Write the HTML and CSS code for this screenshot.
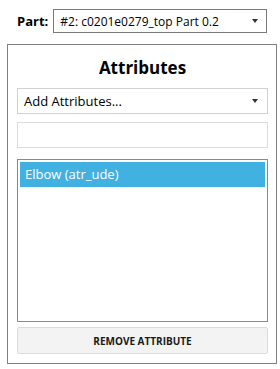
FILE: index.html
```html
<!DOCTYPE html>
<html lang="en">
<head>
  <meta charset="UTF-8" />
  <title>Attributes</title>
  <link rel="stylesheet" href="styles.css">
</head>
<body>
  <div class="part-row">
    <label class="part-label">Part:</label>
    <div class="combo part-combo">
      <span>#2: c0201e0279_top Part 0.2</span>
      <span class="arrow"></span>
    </div>
  </div>

  <section class="panel">
    <h2>Attributes</h2>

    <div class="combo add-combo">
      <span>Add Attributes...</span>
      <span class="arrow"></span>
    </div>

    <div class="text-box"></div>

    <ul class="list-box">
      <li class="selected">Elbow (atr_ude)</li>
    </ul>

    <button class="remove-btn">REMOVE ATTRIBUTE</button>
  </section>
</body>
</html>
```

FILE: styles.css
```css
body {
  margin: 0;
  background-color: #fff;
  color: #000;
  font-family: 'Open Sans', 'Noto Sans', sans-serif;
  font-size: 13px;
}

.part-row {
  display: flex;
  align-items: center;
  padding: 9px 0 0 17px;
}

.part-label {
  font-weight: bold;
  font-size: 13px;
  margin-right: 5px;
}

.combo {
  display: flex;
  align-items: center;
  justify-content: space-between;
  box-sizing: border-box;
  background-color: #fff;
}

.part-combo {
  width: 214px;
  height: 24px;
  border: 1px solid #7a7a7a;
  padding: 0 8px 0 6px;
  font-size: 12px;
}

.arrow {
  width: 0;
  height: 0;
  border-left: 3px solid transparent;
  border-right: 3px solid transparent;
  border-top: 4px solid #333;
}

.panel {
  box-sizing: border-box;
  width: 270px;
  height: 320px;
  margin: 11px 0 0 7px;
  border: 1px solid #808080;
  padding: 0 8px 0 9px;
  display: flex;
  flex-direction: column;
}

.panel h2 {
  margin: 0;
  height: 43px;
  line-height: 46px;
  text-align: center;
  font-size: 17px;
  font-weight: bold;
}

.add-combo {
  height: 26px;
  border: 1px solid #d0d0d0;
  padding: 0 9px 0 6px;
  font-size: 13px;
}

.text-box {
  box-sizing: border-box;
  height: 26px;
  margin-top: 8px;
  border: 1px solid #dcdcdc;
}

.list-box {
  box-sizing: border-box;
  height: 163px;
  margin: 11px 0 0;
  padding: 2px;
  list-style: none;
  border: 1px solid #8a8a8a;
}

.list-box li {
  height: 25px;
  line-height: 25px;
  padding-left: 5px;
  font-size: 13px;
}

.list-box li.selected {
  background-color: #41b1e1;
  color: #fff;
}

.remove-btn {
  height: 27px;
  margin-top: 5px;
  border: 1px solid #dcdcdc;
  border-radius: 2px;
  background-color: #f3f3f3;
  color: #1a1a1a;
  font-family: 'Open Sans', 'Noto Sans', sans-serif;
  font-size: 10px;
  font-weight: bold;
  cursor: pointer;
}
```
